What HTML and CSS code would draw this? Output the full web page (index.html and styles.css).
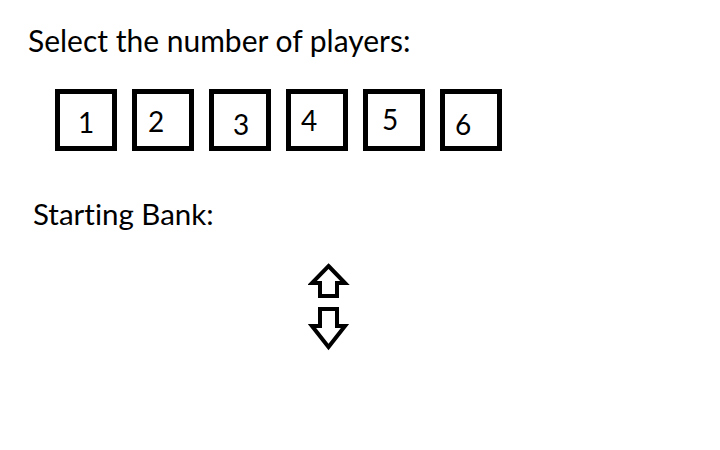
FILE: index.html
```html
<!DOCTYPE html>
<html>
<head>
<meta charset="utf-8">
<link rel="stylesheet" href="styles.css">
</head>
<body>
<div class="page">
  <h1 class="title">Select the number of players:</h1>
  <div class="players">
    <div class="box b1">1</div>
    <div class="box b2">2</div>
    <div class="box b3">3</div>
    <div class="box b4">4</div>
    <div class="box b5">5</div>
    <div class="box b6">6</div>
  </div>
  <h2 class="bank">Starting Bank:</h2>
  <div class="arrows">
    <svg class="arrow-svg" width="42" height="92" viewBox="308 262 42 92" xmlns="http://www.w3.org/2000/svg">
      <polygon points="328.5,266 345,283 337,283 337,296 320,296 320,283 312,283" fill="#fff" stroke="#000" stroke-width="4" stroke-linejoin="miter"/>
      <polygon points="320,309 337,309 337,326 345,326 328.5,347 312,326 320,326" fill="#fff" stroke="#000" stroke-width="4" stroke-linejoin="miter"/>
    </svg>
  </div>
</div>
</body>
</html>
```

FILE: styles.css
```css
html, body {
  margin: 0;
  padding: 0;
  background: #fff;
}
.page {
  width: 720px;
  height: 450px;
  font-family: Lato, "Liberation Sans", sans-serif;
  font-variant-ligatures: none;
  color: #000;
  overflow: hidden;
}
.title {
  margin: 0;
  padding: 22px 0 0 28px;
  font-size: 30px;
  font-weight: 400;
  line-height: 36px;
}
.players {
  display: flex;
  gap: 15px;
  margin: 31px 0 0 55px;
}
.box {
  box-sizing: border-box;
  width: 62px;
  height: 62px;
  border: 5px solid #000;
  font-size: 28px;
  line-height: 28px;
}
.b1 { padding: 14px 0 0 18px; }
.b2 { padding: 13px 0 0 11px; }
.b3 { padding: 16px 0 0 19px; }
.b4 { padding: 12px 0 0 10px; }
.b5 { padding: 11px 0 0 14px; }
.b6 { padding: 16px 0 0 10px; }
.bank {
  margin: 0;
  padding: 45px 0 0 33px;
  font-size: 29.5px;
  font-weight: 400;
  line-height: 36px;
}
.arrows {
  margin: 30px 0 0 308px;
  width: 42px;
  height: 92px;
}
.arrow-svg {
  display: block;
}
```
